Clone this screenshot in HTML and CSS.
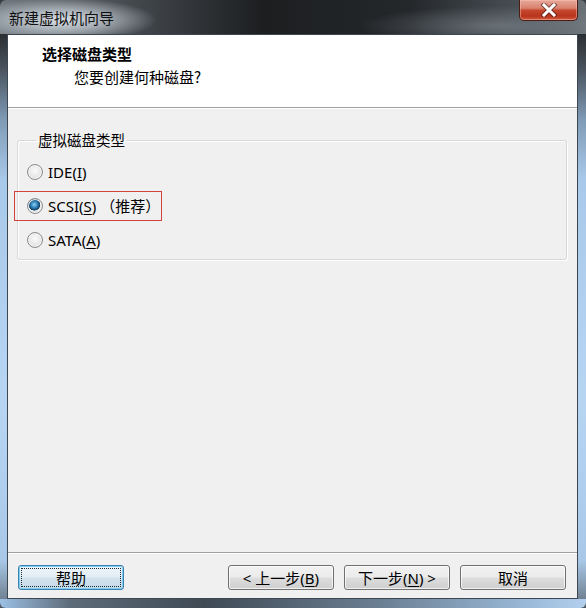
FILE: index.html
```html
<!DOCTYPE html>
<html lang="zh-CN">
<head>
<meta charset="utf-8">
<title>新建虚拟机向导</title>
<link rel="stylesheet" href="styles.css">
</head>
<body>
<div class="window">
  <div class="titlebar">
    <span class="title">新建虚拟机向导</span>
    <button class="close" aria-label="关闭">
      <svg width="18" height="14" viewBox="0 0 18 14">
        <path d="M4 2 L14 12 M14 2 L4 12" stroke="#3a1410" stroke-width="5" stroke-linecap="square" fill="none" opacity="0.55"/>
        <path d="M4 2 L14 12 M14 2 L4 12" stroke="#ffffff" stroke-width="3" stroke-linecap="square" fill="none"/>
      </svg>
    </button>
  </div>
  <div class="client">
    <div class="header">
      <div class="h-title">选择磁盘类型</div>
      <div class="h-sub">您要创建何种磁盘?</div>
    </div>
    <div class="content">
      <fieldset class="group">
        <legend>虚拟磁盘类型</legend>
        <div class="opt"><span class="radio"></span><span class="lbl">IDE(<u>I</u>)</span></div>
        <div class="opt"><span class="mark"><span class="radio checked"></span><span class="lbl">SCSI(<u>S</u>)</span><span class="rec">（推荐）</span></span></div>
        <div class="opt"><span class="radio"></span><span class="lbl">SATA(<u>A</u>)</span></div>
      </fieldset>
    </div>
    <div class="footer">
      <button class="btn default"><span class="focus">帮助</span></button>
      <div class="spacer"></div>
      <button class="btn">&lt; 上一步(<u>B</u>)</button>
      <button class="btn">下一步(<u>N</u>) &gt;</button>
      <button class="btn">取消</button>
    </div>
  </div>
</div>
</body>
</html>
```
FILE: styles.css
```css
html, body {
  margin: 0;
  padding: 0;
}
body {
  width: 586px;
  height: 608px;
  overflow: hidden;
  font-family: "Noto Sans", "Noto Sans CJK SC", sans-serif;
  font-size: 15px;
  color: #000;
}
.window {
  width: 586px;
  height: 608px;
  box-sizing: border-box;
  display: flex;
  flex-direction: column;
  padding: 0 8px 9px 7px;
  background:
    linear-gradient(180deg, #3a3f44 0, #2a2e31 34px, #4b5560 70px, #7f9bb6 120px, #a9c9ea 180px, #b7d5f3 400px, #a9c8e8 560px, #6f8090 600px, #4d5862 608px);
  position: relative;
}
.window::after {
  content: "";
  position: absolute;
  left: 0;
  right: 0;
  bottom: 0;
  height: 9px;
  background: linear-gradient(90deg, #9cc0e4 0, #5d6b78 12%, #3f4a55 35%, #6b7f93 65%, #9ab9d8 90%, #b2d0ee 100%);
  border-radius: 0 0 6px 6px;
}
.titlebar {
  height: 34px;
  margin: 0 -8px 0 -7px;
  display: flex;
  align-items: flex-start;
  justify-content: space-between;
  background:
    radial-gradient(ellipse 95px 22px at 62px 20px, rgba(225,230,236,0.95) 0, rgba(200,208,216,0.7) 45%, rgba(120,128,136,0) 100%),
    radial-gradient(ellipse 140px 20px at 500px 26px, rgba(130,138,146,0.6), rgba(60,64,68,0) 100%),
    linear-gradient(90deg, #70787f 0, #3a3e42 28%, #1c1e20 45%, #25282b 70%, #4b5258 90%, #6a7278 100%);
  border-radius: 6px 6px 0 0;
}
.title {
  padding: 9px 0 0 9px;
  line-height: 18px;
  font-size: 15px;
  font-family: "Noto Sans CJK SC", sans-serif;
  color: #111;
}
.close {
  width: 59px;
  height: 21px;
  margin: 0 8px 0 0;
  padding: 0;
  border: 1px solid #4a1d15;
  border-top: none;
  border-radius: 0 0 5px 5px;
  background: linear-gradient(180deg, #e7a898 0, #d98370 40%, #c4472d 52%, #b8341c 80%, #cf5a3c 100%);
  box-shadow: inset 0 0 0 1px rgba(255,200,190,0.45);
  display: flex;
  align-items: center;
  justify-content: center;
}
.close svg {
  display: block;
}
.client {
  flex: 1;
  display: flex;
  flex-direction: column;
  border: 1px solid #3d4752;
  background: #f0f0f0;
}
.header {
  height: 72px;
  background: #fff;
  border-bottom: 1px solid #a0a0a0;
  box-sizing: content-box;
  font-family: "Noto Sans CJK SC", sans-serif;
}
.h-title {
  padding: 9px 0 0 34px;
  line-height: 20px;
  font-weight: bold;
  font-size: 15px;
}
.h-sub {
  padding: 3px 0 0 66px;
  line-height: 20px;
  font-size: 15px;
}
.content {
  flex: 1;
  padding: 22px 10px 0 9px;
  border-top: 1px solid #fff;
}
.group {
  margin: 0;
  padding: 6px 0 2px 9px;
  border: 1px solid #d5d9dc;
  border-radius: 3px;
  box-shadow: inset 1px 1px 0 #fff, 1px 1px 0 #fff;
  min-width: 0;
}
.group legend {
  margin-left: 9px;
  padding: 0 2px;
  line-height: 18px;
  font-family: "Noto Sans CJK SC", sans-serif;
  font-size: 14.5px;
}
.opt {
  height: 34px;
  display: flex;
  align-items: center;
}
.mark {
  display: flex;
  align-items: center;
  box-sizing: border-box;
  width: 148px;
  height: 30px;
  margin-left: -13px;
  padding-left: 12px;
  border: 1px solid #d2433a;
}
.radio {
  width: 14px;
  height: 14px;
  border-radius: 50%;
  border: 1px solid #8a8b8c;
  background: radial-gradient(circle at 50% 40%, #fbfbfb 0, #e6e6e6 60%, #cfcfcf 100%);
  box-shadow: inset 0 0 0 1px #f4f4f4;
  flex: none;
}
.radio.checked {
  background:
    radial-gradient(circle at 45% 40%, #8fd0f4 0, #3a8cc4 25%, #15507d 44%, #1d3f5c 50%, rgba(0,0,0,0) 54%),
    radial-gradient(circle at 50% 40%, #fbfbfb 0, #e6e6e6 60%, #cfcfcf 100%);
}
.lbl {
  margin-left: 5px;
  font-size: 15px;
  line-height: 18px;
}
.rec {
  margin-left: 4px;
  font-family: "Noto Sans CJK SC", sans-serif;
  font-size: 15px;
  line-height: 18px;
}
u {
  text-underline-offset: 2px;
}
.footer {
  height: 46px;
  box-sizing: border-box;
  border-top: 1px solid #a0a0a0;
  box-shadow: inset 0 1px 0 #fff;
  padding: 12px 11px 9px 10px;
  display: flex;
  gap: 10px;
}
.spacer {
  flex: 1;
}
.btn {
  width: 106px;
  height: 25px;
  margin: 0;
  padding: 0;
  border: 1px solid #707070;
  border-radius: 3px;
  background: linear-gradient(180deg, #f2f2f2 0, #ebebeb 48%, #dddddd 52%, #cfcfcf 100%);
  box-shadow: inset 0 0 0 1px rgba(255,255,255,0.7);
  font-family: "Noto Sans", "Noto Sans CJK SC", sans-serif;
  font-size: 15px;
  line-height: 20px;
  color: #000;
  display: flex;
  align-items: center;
  justify-content: center;
}
.btn.default {
  border-color: #3c7fb1;
  background: linear-gradient(180deg, #eef5fa 0, #e2edf4 48%, #d3e3ee 52%, #c6dae8 100%);
  box-shadow: inset 0 0 0 1px #7fd0f0;
  padding: 2px;
  align-items: stretch;
}
.focus {
  flex: 1;
  display: flex;
  align-items: center;
  justify-content: center;
  border: 1px dotted #1c2a36;
}
```
